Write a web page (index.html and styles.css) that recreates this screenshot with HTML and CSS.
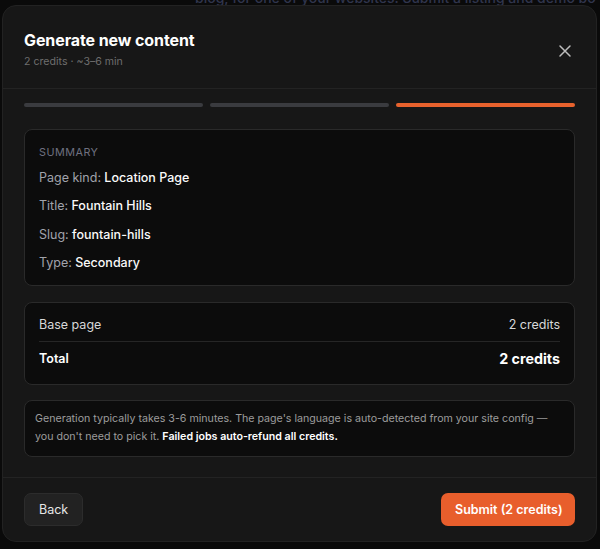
FILE: index.html
```html
<!DOCTYPE html>
<html lang="en">
<head>
    <meta charset="UTF-8">
    <meta name="viewport" content="width=device-width, initial-scale=1.0">
    <title>Generate new content</title>
    <link rel="stylesheet" href="styles.css">
</head>
<body>
    <!-- page behind the dialog, mostly hidden -->
    <p class="backdrop-text">blog, for one of your websites. Submit a listing and demo bo</p>

    <div class="modal">
        <div class="modal-header">
            <div>
                <h2 class="modal-title">Generate new content</h2>
                <div class="modal-sub">2 credits · ~3–6 min</div>
            </div>
            <button class="close-btn" aria-label="Close">
                <svg width="14" height="14" viewBox="0 0 14 14" fill="none" stroke="currentColor" stroke-width="1.5" stroke-linecap="round">
                    <path d="M2 2 L12 12 M12 2 L2 12"/>
                </svg>
            </button>
        </div>

        <div class="modal-body">
            <div class="steps">
                <div class="step done"></div>
                <div class="step done"></div>
                <div class="step active"></div>
            </div>

            <div class="card summary">
                <div class="card-label">Summary</div>
                <div class="row"><span class="key">Page kind:</span> Location Page</div>
                <div class="row"><span class="key">Title:</span> Fountain Hills</div>
                <div class="row"><span class="key">Slug:</span> fountain-hills</div>
                <div class="row"><span class="key">Type:</span> Secondary</div>
            </div>

            <div class="card cost">
                <div class="cost-line">
                    <span>Base page</span>
                    <span>2 credits</span>
                </div>
                <div class="cost-line total">
                    <span>Total</span>
                    <span class="total-value">2 credits</span>
                </div>
            </div>

            <div class="card note">
                Generation typically takes 3-6 minutes. The page's language is auto-detected from your site config —
                you don't need to pick it. <strong>Failed jobs auto-refund all credits.</strong>
            </div>
        </div>

        <div class="modal-footer">
            <button class="btn btn-secondary">Back</button>
            <button class="btn btn-primary">Submit (2 credits)</button>
        </div>
    </div>
</body>
</html>
```

FILE: styles.css
```css
* { box-sizing: border-box; }

body {
    margin: 0;
    padding: 5px 0 0 2px;
    background: #0a0a0a;
    font-family: Inter, "Noto Sans", sans-serif;
    color: #f2f2f2;
    overflow: hidden;
}

.backdrop-text {
    position: absolute;
    top: -11px;
    left: 195px;
    margin: 0;
    font-size: 14px;
    font-weight: 500;
    color: #30354d;
    white-space: nowrap;
}

.modal {
    position: relative;
    width: 595px;
    height: 537px;
    background: #171717;
    border: 1px solid #222;
    border-radius: 14px;
    display: flex;
    flex-direction: column;
}

.modal-header {
    display: flex;
    justify-content: space-between;
    align-items: center;
    padding: 22px 21px 19px 21px;
    border-bottom: 1px solid #232323;
}
.modal-title {
    margin: 0;
    font-size: 16px;
    font-weight: 700;
    line-height: 24px;
    letter-spacing: -0.1px;
    color: #fff;
}
.modal-sub {
    margin-top: 3px;
    font-size: 10.6px;
    line-height: 14px;
    color: #6e6e6e;
}
.close-btn {
    background: none;
    border: 0;
    padding: 0;
    color: #bdbdbd;
    display: flex;
    margin-top: 4px;
    margin-right: 3px;
}

.modal-body {
    flex: 1;
    padding: 14px 21px 20px 21px;
    display: flex;
    flex-direction: column;
}

.steps {
    display: flex;
    gap: 7px;
    margin-bottom: 22px;
}
.step {
    flex: 1;
    height: 4px;
    border-radius: 2px;
}
.step.done { background: #3a3b3f; }
.step.active { background: #e8622d; }

.card {
    background: #0c0c0c;
    border: 1px solid #2a2a2a;
    border-radius: 8px;
}

.summary {
    padding: 15px 14px 12px 14px;
    margin-bottom: 16px;
}
.card-label {
    font-size: 10.8px;
    line-height: 16px;
    letter-spacing: 0.5px;
    text-transform: uppercase;
    color: #6f7180;
    margin-bottom: 7px;
}
.row {
    font-size: 12.5px;
    line-height: 20px;
    font-weight: 500;
    color: #fafafa;
    margin-bottom: 8.3px;
}
.row:last-child { margin-bottom: 0; }
.key {
    font-weight: 400;
    color: #a1a3ab;
}

.cost {
    padding: 12px 14px 14px 14px;
    margin-bottom: 15px;
}
.cost-line {
    display: flex;
    justify-content: space-between;
    align-items: center;
    font-size: 12.5px;
    line-height: 20px;
    color: #d8d8d8;
    padding-bottom: 6px;
    border-bottom: 1px solid #262626;
}
.cost-line.total {
    padding: 6px 0 0 0;
    border-bottom: 0;
    font-weight: 600;
    color: #fff;
    line-height: 22px;
}
.total-value {
    font-size: 14.3px;
    font-weight: 700;
}

.note {
    padding: 9px 10px 10px 10px;
    font-size: 10.65px;
    line-height: 18px;
    color: #9c9c9c;
}
.note strong {
    color: #fff;
    font-weight: 600;
}

.modal-footer {
    display: flex;
    justify-content: space-between;
    align-items: center;
    padding: 15px 21px 15px 21px;
    border-top: 1px solid #232323;
}
.btn {
    font-family: inherit;
    font-size: 12.5px;
    height: 33px;
    border-radius: 7px;
    padding: 0 14px;
    white-space: nowrap;
    cursor: pointer;
}
.btn-secondary {
    background: #222;
    border: 1px solid #2c2c2c;
    color: #e6e6e6;
}
.btn-primary {
    background: #e85e2c;
    border: 0;
    color: #fff;
    font-weight: 600;
    width: 134px;
}
```
